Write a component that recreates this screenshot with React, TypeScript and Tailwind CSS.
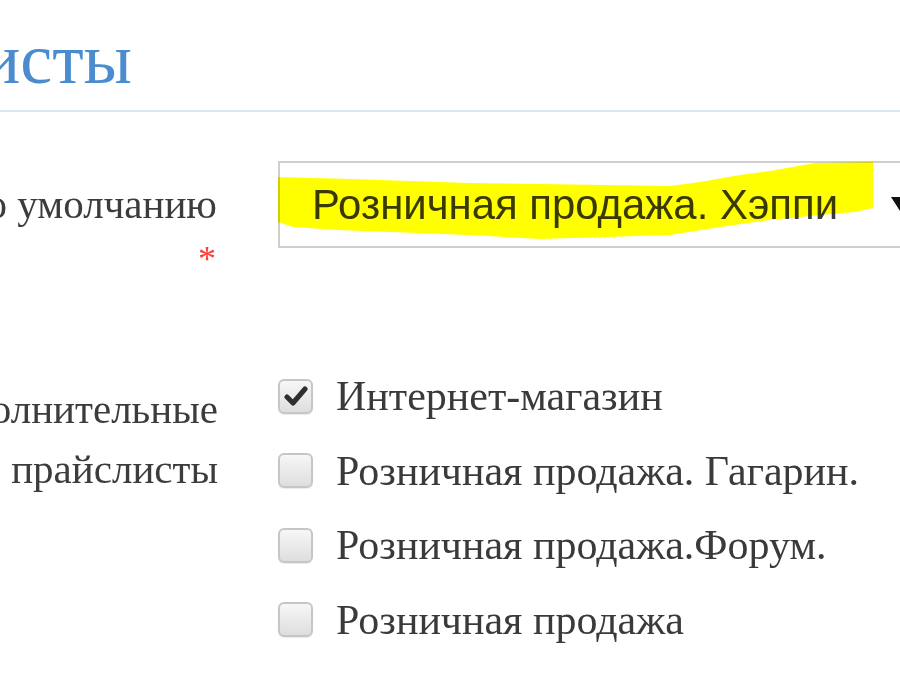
import React from "react";

const serif = { fontFamily: '"Liberation Serif", "Times New Roman", serif' };
const sans = { fontFamily: '"Liberation Sans", Arial, sans-serif' };

const extraLists = [
  { name: "Интернет-магазин", checked: true },
  { name: "Розничная продажа. Гагарин.", checked: false },
  { name: "Розничная продажа.Форум.", checked: false },
  { name: "Розничная продажа", checked: false },
];

function Checkbox({ checked }: { checked: boolean }) {
  return (
    <span className="flex h-[35px] w-[35px] shrink-0 items-center justify-center rounded-[6px] border-2 border-[#c6c6c6] bg-gradient-to-b from-[#f7f7f7] to-[#dedede] shadow-[0_1px_1px_rgba(0,0,0,0.08)]">
      {checked && (
        <svg width="24" height="22" viewBox="0 0 24 22">
          <path d="M3 12 L9 18 L21 4" fill="none" stroke="#2f2f2f" strokeWidth="5" strokeLinecap="round" strokeLinejoin="round" />
        </svg>
      )}
    </span>
  );
}

export default function App() {
  return (
    <div className="relative h-[700px] w-[900px] overflow-hidden bg-white" style={serif}>
      <div className="flex w-[132px] justify-end pt-[23px]">
        <h1 className="whitespace-nowrap text-[72px] leading-[72px] text-[#4a8ccd]">Прайслисты</h1>
      </div>
      <div className="mt-[15px] h-[2px] w-full bg-[#dce6f1]" />

      {/* default price list */}
      <div className="mt-[49px] flex items-start">
        <div className="flex w-[217px] shrink-0 flex-col items-end pt-[19px] text-[41px] leading-[48px] text-[#3c3c3c]">
          <span className="whitespace-nowrap">По умолчанию</span>
          <span className="mr-[1px] mt-[13px] text-[36px] leading-[36px] text-[#ff3b3b]">*</span>
        </div>
        <div className="relative ml-[61px] flex h-[87px] w-[700px] shrink-0 items-center border-2 border-[#cfcfcf] pl-[32px]">
          <span className="whitespace-nowrap text-[41.9px] leading-[40px] text-[#3a3a3a]" style={sans}>
            Розничная продажа. Хэппи
          </span>
          <svg className="ml-[53px] mt-[-2px]" width="18" height="14" viewBox="0 0 18 14">
            <polygon points="0,0 18,0 9,14" fill="#111" />
          </svg>
          <svg className="pointer-events-none absolute left-[-2px] top-[-2px] mix-blend-multiply" width="600" height="82" viewBox="0 0 600 82">
            <polygon
              points="0,16 72,18 192,22 392,25 422,21 462,14 492,10 537,2 595,1 595,47 577,51 542,54 492,59 442,66 392,74 262,78 192,74 60,69 15,66 0,61"
              fill="#ffff00"
            />
          </svg>
        </div>
      </div>

      {/* additional price lists */}
      <div className="mt-[82px] flex items-start">
        <div className="flex w-[218px] shrink-0 flex-col items-end pt-[20px] text-[41px] leading-[60px] text-[#3c3c3c]">
          <span className="whitespace-nowrap">Дополнительные</span>
          <span className="whitespace-nowrap">прайслисты</span>
        </div>
        <div className="ml-[60px] flex flex-col">
          {extraLists.map((item) => (
            <label key={item.name} className="flex h-[74.5px] items-center">
              <Checkbox checked={item.checked} />
              <span className="ml-[23px] whitespace-nowrap text-[42px] leading-[48px] text-[#3a3a3a]">{item.name}</span>
            </label>
          ))}
        </div>
      </div>
    </div>
  );
}
